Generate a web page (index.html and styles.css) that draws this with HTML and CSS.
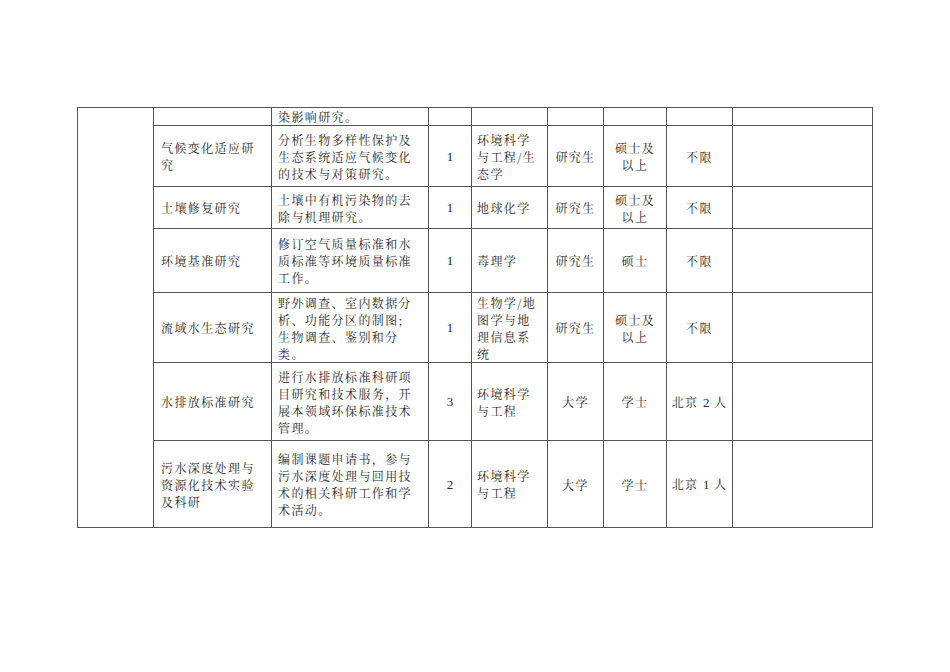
FILE: index.html
```html
<!DOCTYPE html>
<html lang="zh-CN">
<head>
<meta charset="utf-8">
<title>岗位表</title>
<link rel="stylesheet" href="styles.css">
</head>
<body>
<div class="page">
<table class="jobs">
<colgroup>
<col class="c1"><col class="c2"><col class="c3"><col class="c4"><col class="c5"><col class="c6"><col class="c7"><col class="c8"><col class="c9">
</colgroup>
<tbody>
<tr class="r1">
<td rowspan="7"></td>
<td></td>
<td class="desc">染影响研究。</td>
<td></td><td></td><td></td><td></td><td></td><td></td>
</tr>
<tr class="r2">
<td class="name">气候变化适应研<br>究</td>
<td class="desc">分析生物多样性保护及<br>生态系统适应气候变化<br>的技术与对策研究。</td>
<td class="num">1</td>
<td class="major">环境科学<br>与工程/生<br>态学</td>
<td class="ctr">研究生</td>
<td class="ctr">硕士及<br>以上</td>
<td class="ctr">不限</td>
<td></td>
</tr>
<tr class="r3">
<td class="name">土壤修复研究</td>
<td class="desc">土壤中有机污染物的去<br>除与机理研究。</td>
<td class="num">1</td>
<td class="major">地球化学</td>
<td class="ctr">研究生</td>
<td class="ctr">硕士及<br>以上</td>
<td class="ctr">不限</td>
<td></td>
</tr>
<tr class="r4">
<td class="name">环境基准研究</td>
<td class="desc">修订空气质量标准和水<br>质标准等环境质量标准<br>工作。</td>
<td class="num">1</td>
<td class="major">毒理学</td>
<td class="ctr">研究生</td>
<td class="ctr">硕士</td>
<td class="ctr">不限</td>
<td></td>
</tr>
<tr class="r5">
<td class="name">流域水生态研究</td>
<td class="desc">野外调查、室内数据分<br>析、功能分区的制图;<br>生物调查、鉴别和分<br>类。</td>
<td class="num">1</td>
<td class="major">生物学/地<br>图学与地<br>理信息系<br>统</td>
<td class="ctr">研究生</td>
<td class="ctr">硕士及<br>以上</td>
<td class="ctr">不限</td>
<td></td>
</tr>
<tr class="r6">
<td class="name">水排放标准研究</td>
<td class="desc">进行水排放标准科研项<br>目研究和技术服务，开<br>展本领域环保标准技术<br>管理。</td>
<td class="num">3</td>
<td class="major">环境科学<br>与工程</td>
<td class="ctr">大学</td>
<td class="ctr">学士</td>
<td class="ctr">北京 <span class="n">2</span> 人</td>
<td></td>
</tr>
<tr class="r7">
<td class="name">污水深度处理与<br>资源化技术实验<br>及科研</td>
<td class="desc">编制课题申请书，参与<br>污水深度处理与回用技<br>术的相关科研工作和学<br>术活动。</td>
<td class="num">2</td>
<td class="major">环境科学<br>与工程</td>
<td class="ctr">大学</td>
<td class="ctr">学士</td>
<td class="ctr">北京 <span class="n">1</span> 人</td>
<td></td>
</tr>
</tbody>
</table>
</div>
</body>
</html>
```

FILE: styles.css
```css
html, body {
  margin: 0;
  padding: 0;
  background: #ffffff;
}

.page {
  padding: 107px 0 0 77px;
}

.jobs {
  border-collapse: collapse;
  table-layout: fixed;
  width: 796px;
  font-family: "Noto Serif CJK SC", "Noto Sans CJK SC", serif;
  font-size: 12px;
  line-height: 17px;
  letter-spacing: 1.4px;
  color: #2a2a2a;
}

.jobs td {
  border: 1px solid #555555;
  padding: 0 6px;
  vertical-align: middle;
  text-align: left;
  overflow: hidden;
  white-space: nowrap;
}

.c1 { width: 76px; }
.c2 { width: 118px; }
.c3 { width: 157px; }
.c4 { width: 43px; }
.c5 { width: 76px; }
.c6 { width: 56px; }
.c7 { width: 63px; }
.c8 { width: 66px; }
.c9 { width: 140px; }

.r1 td { height: 17px; }
.r2 td { height: 60px; }
.r3 td { height: 41px; }
.r4 td { height: 63px; }
.r5 td { height: 69px; }
.r6 td { height: 77px; }
.r7 td { height: 86px; }

.jobs td.name { padding-left: 7px; }
.jobs td.desc { padding-left: 6px; }
.jobs td.major { padding-left: 5px; }

.jobs td.num {
  text-align: center;
  font-family: "Liberation Serif", serif;
  font-size: 13px;
  letter-spacing: 0;
  padding: 0;
}

.jobs td.ctr {
  text-align: center;
  padding: 0;
}

.n {
  font-family: "Liberation Serif", serif;
  font-size: 13px;
  letter-spacing: 0;
}
```
